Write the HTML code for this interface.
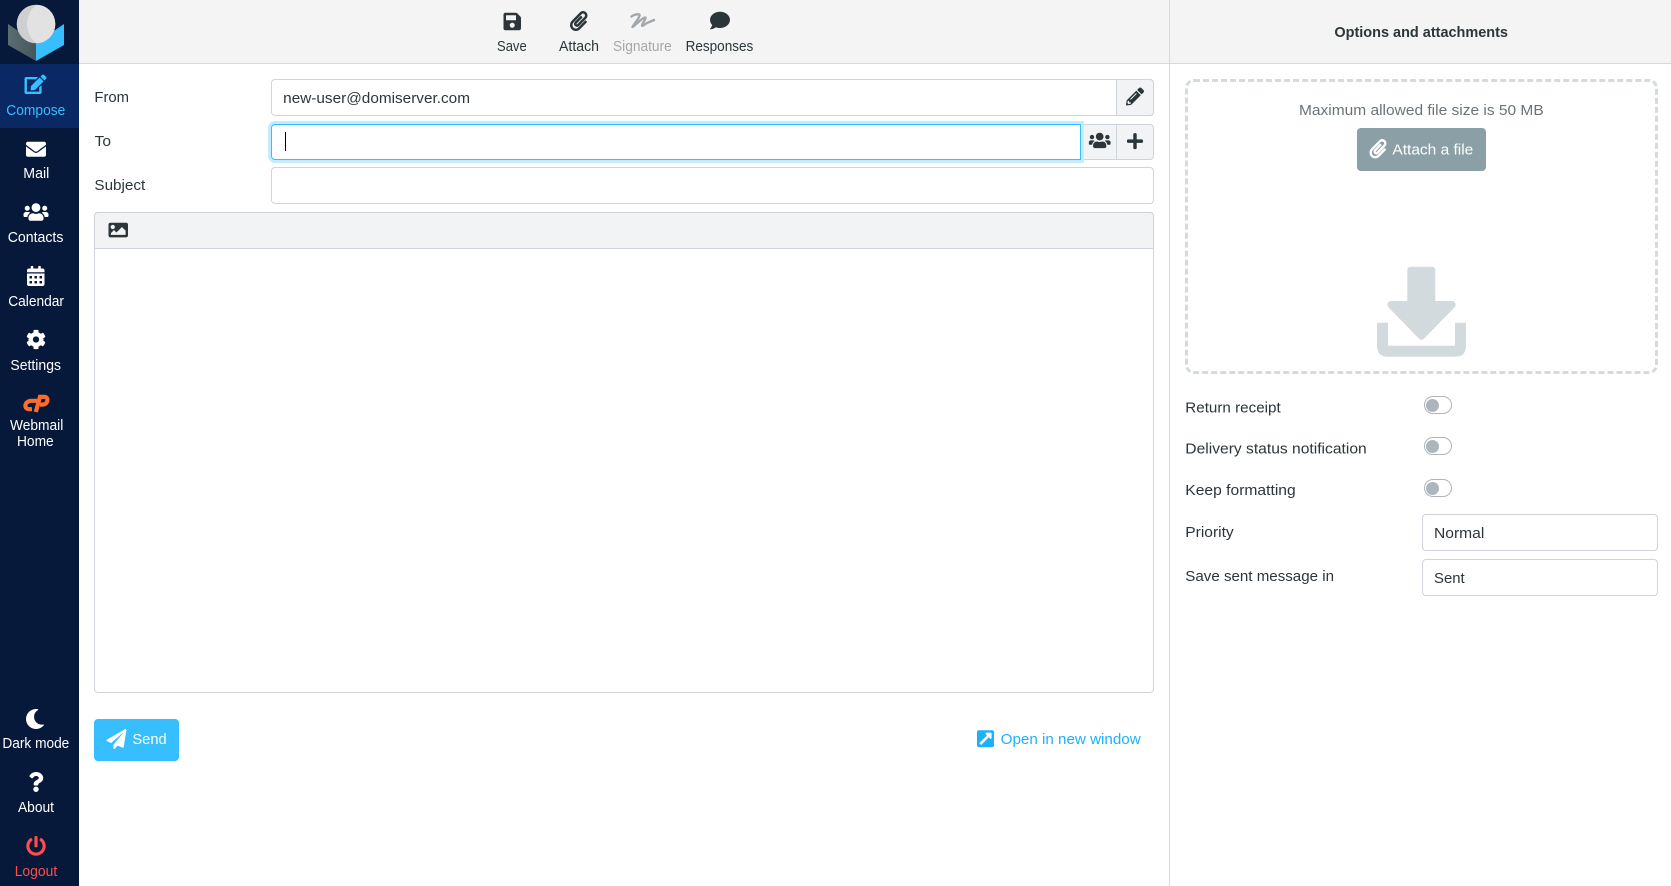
<!DOCTYPE html>
<html lang="en"><head><meta charset="utf-8"><title>Compose</title>
<style>
html,body{margin:0;padding:0;width:1671px;height:886px;overflow:hidden;background:#fff}
.b{position:absolute;box-sizing:border-box}
.in{border:1px solid #ced4da;background:#fff;border-radius:4px}
.ad{border:1px solid #ced4da;background:#f1f3f5}
.tg{left:1424px;width:28px;height:18px;border:1px solid #adb5bd;border-radius:9px;background:#fff}
.tg i{position:absolute;left:1px;top:1.5px;width:13px;height:13px;border-radius:50%;background:#adb5bd}
svg{position:absolute;left:0;top:0}
text{font-family:"Liberation Sans",Arial,sans-serif;font-size:15px;fill:#2c363a}
.w{fill:#fff}.bl{fill:#37beff}.r{fill:#ff4d4d}.g{fill:#a3a8ac}
</style></head><body>
<div class="b" style="left:0;top:0;width:79px;height:886px;background:#06193a"></div>
<div class="b" style="left:0;top:64px;width:79px;height:64px;background:#0a2864"></div>
<div class="b" style="left:79px;top:0;width:1592px;height:64px;background:#f4f4f4;border-bottom:1px solid #d4dbde"></div>
<div class="b" style="left:1169px;top:0;width:1px;height:886px;background:#d4dbde"></div>

<div class="b in" style="left:271px;top:79px;width:883px;height:37px"></div>
<div class="b ad" style="left:1116px;top:79px;width:38px;height:37px;border-radius:0 4px 4px 0"></div>
<div class="b ad" style="left:1080px;top:124px;width:37px;height:36px;border-left:0"></div>
<div class="b ad" style="left:1116px;top:124px;width:38px;height:36px;border-radius:0 4px 4px 0"></div>
<div class="b" style="left:271px;top:124px;width:810px;height:36px;background:#fff;border:1px solid #37beff;border-radius:4px 0 0 4px;box-shadow:0 0 0 3px #c3ecff"></div>
<div class="b in" style="left:271px;top:167px;width:883px;height:37px"></div>
<div class="b in" style="left:94px;top:212px;width:1060px;height:481px"></div>
<div class="b" style="left:94px;top:212px;width:1060px;height:37px;background:#f1f3f5;border:1px solid #ced4da;border-radius:4px 4px 0 0"></div>
<div class="b" style="left:94px;top:719px;width:85px;height:42px;background:#37beff;border-radius:4px"></div>

<div class="b" style="left:1185px;top:79px;width:473px;height:295px;border:3px dashed #d4dbde;border-radius:9px"></div>
<div class="b" style="left:1357px;top:128px;width:129px;height:43px;background:#8a9fa6;border-radius:4px"></div>
<div class="b tg" style="top:396px"><i></i></div>
<div class="b tg" style="top:437px"><i></i></div>
<div class="b tg" style="top:479px"><i></i></div>
<div class="b in" style="left:1422px;top:514px;width:236px;height:37px"></div>
<div class="b in" style="left:1422px;top:559px;width:236px;height:37px"></div>
<div class="b" style="left:285px;top:132px;width:1px;height:19px;background:#000"></div>

<svg width="1671" height="886" viewBox="0 0 1671 886" xmlns="http://www.w3.org/2000/svg">
<defs>
<linearGradient id="lg" x1="0" x2="1" y1="0" y2="0"><stop offset="0" stop-color="#5a6d71"/><stop offset="1" stop-color="#45575b"/></linearGradient>
<clipPath id="sp"><circle cx="36" cy="24" r="19.3"/></clipPath>
</defs>
<!-- logo -->
<path d="M8 24L36 43V61L8 45Z" fill="url(#lg)"/>
<path d="M64 24L36 43V61L64 45Z" fill="#37beff"/>
<circle cx="36" cy="24" r="19.3" fill="#cfcfcf"/>
<ellipse cx="44" cy="24" rx="17" ry="21" fill="#e2e2e2" clip-path="url(#sp)"/>

<!-- sidebar icons -->
<svg x="24.5" y="74.5" width="22" height="19.6" viewBox="0 0 576 512"><path fill="#37beff" d="M402.6 83.2l90.2 90.2c3.8 3.8 3.8 10 0 13.8L274.4 405.6l-92.8 10.3c-12.4 1.4-22.9-9.1-21.5-21.5l10.3-92.8L388.8 83.2c3.8-3.8 10-3.8 13.8 0zm162-22.9l-48.8-48.8c-15.2-15.2-39.9-15.2-55.2 0l-35.4 35.4c-3.8 3.8-3.8 10 0 13.8l90.2 90.2c3.8 3.8 10 3.8 13.8 0l35.4-35.4c15.2-15.3 15.2-40 0-55.2zM384 346.2V448H64V128h229.8c3.2 0 6.2-1.3 8.5-3.5l40-40c7.6-7.6 2.2-20.5-8.5-20.5H48C21.5 64 0 85.5 0 112v352c0 26.5 21.5 48 48 48h352c26.5 0 48-21.5 48-48V306.2c0-10.7-12.9-16-20.5-8.5l-40 40c-2.2 2.3-3.5 5.3-3.5 8.5z"/></svg>
<svg x="26" y="139.2" width="20" height="20" viewBox="0 0 512 512"><path fill="#fff" d="M502.3 190.8c3.9-3.1 9.7-.2 9.7 4.7V400c0 26.5-21.5 48-48 48H48c-26.5 0-48-21.5-48-48V195.6c0-5 5.7-7.8 9.7-4.7 22.4 17.4 52.1 39.5 154.1 113.6 21.1 15.4 56.7 47.8 92.2 47.6 35.7.3 72-32.8 92.3-47.6 102-74.1 131.6-96.3 154-113.7zM256 320c23.2.4 56.6-29.2 73.4-41.4 132.7-96.3 142.8-104.7 173.4-128.7 5.8-4.5 9.2-11.5 9.2-18.9v-19c0-26.5-21.5-48-48-48H48C21.5 64 0 85.5 0 112v19c0 7.4 3.4 14.3 9.2 18.9 30.6 23.9 40.7 32.4 173.4 128.7 16.8 12.2 50.2 41.8 73.4 41.4z"/></svg>
<svg x="23.5" y="202" width="25" height="20" viewBox="0 0 640 512"><path fill="#fff" d="M96 224c35.3 0 64-28.7 64-64s-28.7-64-64-64-64 28.7-64 64 28.7 64 64 64zm448 0c35.3 0 64-28.7 64-64s-28.7-64-64-64-64 28.7-64 64 28.7 64 64 64zm32 32h-64c-17.6 0-33.5 7.1-45.1 18.6 40.3 22.1 68.9 62 75.1 109.4h66c17.7 0 32-14.3 32-32v-32c0-35.3-28.7-64-64-64zm-256 0c61.9 0 112-50.1 112-112S381.9 32 320 32 208 82.1 208 144s50.1 112 112 112zm76.8 32h-8.3c-20.8 10-43.9 16-68.5 16s-47.6-6-68.5-16h-8.3C179.6 288 128 339.6 128 403.2V432c0 26.5 21.5 48 48 48h288c26.5 0 48-21.5 48-48v-28.8c0-63.6-51.6-115.2-115.2-115.2zm-223.7-13.4C161.5 263.1 145.6 256 128 256H64c-35.3 0-64 28.7-64 64v32c0 17.7 14.3 32 32 32h65.9c6.3-47.4 34.9-87.3 75.2-109.4z"/></svg>
<svg x="27" y="266" width="17.5" height="20" viewBox="0 0 448 512"><path fill="#fff" d="M0 464c0 26.5 21.5 48 48 48h352c26.5 0 48-21.5 48-48V192H0v272zm320-196c0-6.6 5.4-12 12-12h40c6.6 0 12 5.4 12 12v40c0 6.6-5.4 12-12 12h-40c-6.6 0-12-5.4-12-12v-40zm0 128c0-6.6 5.4-12 12-12h40c6.6 0 12 5.4 12 12v40c0 6.6-5.4 12-12 12h-40c-6.6 0-12-5.4-12-12v-40zM192 268c0-6.6 5.4-12 12-12h40c6.6 0 12 5.4 12 12v40c0 6.6-5.4 12-12 12h-40c-6.6 0-12-5.4-12-12v-40zm0 128c0-6.6 5.4-12 12-12h40c6.6 0 12 5.4 12 12v40c0 6.6-5.4 12-12 12h-40c-6.6 0-12-5.4-12-12v-40zM64 268c0-6.6 5.4-12 12-12h40c6.6 0 12 5.4 12 12v40c0 6.6-5.4 12-12 12H76c-6.6 0-12-5.4-12-12v-40zm0 128c0-6.6 5.4-12 12-12h40c6.6 0 12 5.4 12 12v40c0 6.6-5.4 12-12 12H76c-6.6 0-12-5.4-12-12v-40zM400 64h-48V16c0-8.8-7.2-16-16-16h-32c-8.8 0-16 7.2-16 16v48H160V16c0-8.8-7.2-16-16-16h-32c-8.8 0-16 7.2-16 16v48H48C21.5 64 0 85.5 0 112v48h448v-48c0-26.5-21.5-48-48-48z"/></svg>
<svg x="26" y="329.5" width="20" height="20" viewBox="0 0 512 512"><path fill="#fff" d="M487.4 315.7l-42.6-24.6c4.3-23.2 4.3-47 0-70.2l42.6-24.6c4.9-2.8 7.1-8.6 5.5-14-11.1-35.6-30-67.8-54.7-94.6-3.8-4.1-10-5.1-14.8-2.3L380.8 110c-17.9-15.4-38.5-27.3-60.8-35.1V25.8c0-5.6-3.9-10.5-9.4-11.7-36.7-8.2-74.3-7.8-109.2 0-5.5 1.2-9.4 6.1-9.4 11.7V75c-22.2 7.9-42.8 19.8-60.8 35.1L88.7 85.5c-4.9-2.8-11-1.9-14.8 2.3-24.7 26.7-43.6 58.9-54.7 94.6-1.7 5.4.6 11.2 5.5 14L67.3 221c-4.3 23.2-4.3 47 0 70.2l-42.6 24.6c-4.9 2.8-7.1 8.6-5.5 14 11.1 35.6 30 67.8 54.7 94.6 3.8 4.1 10 5.1 14.8 2.3l42.6-24.6c17.9 15.4 38.5 27.3 60.8 35.1v49.2c0 5.6 3.9 10.5 9.4 11.7 36.7 8.2 74.3 7.8 109.2 0 5.5-1.2 9.4-6.1 9.4-11.7v-49.2c22.2-7.9 42.8-19.8 60.8-35.1l42.6 24.6c4.9 2.8 11 1.9 14.8-2.3 24.7-26.7 43.6-58.9 54.7-94.6 1.5-5.5-.7-11.3-5.6-14.1zM256 336c-44.1 0-80-35.9-80-80s35.9-80 80-80 80 35.9 80 80-35.9 80-80 80z"/></svg>
<path fill="none" stroke="#ff6c2c" stroke-width="4.2" d="M37 400.8H31.5C27.500 400.8 25.400 403.300 25.400 405.800C25.400 408 27 409.200 29 409.200H32"/>
<path fill="none" stroke="#ff6c2c" stroke-width="4.2" d="M35.800 412L40 396.800H44C46.800 396.800 47.800 398.800 47.300 401C46.800 403.300 44.800 404.600 42.500 404.600H40"/>
<svg x="25" y="709" width="20" height="20" viewBox="0 0 512 512"><path fill="#fff" d="M283.211 512c78.962 0 151.079-35.925 198.857-94.792 7.068-8.708-.639-21.43-11.562-19.35-124.203 23.654-238.262-71.576-238.262-196.954 0-72.222 38.662-138.635 101.498-174.394 9.686-5.512 7.25-20.197-3.756-22.23A258.156 258.156 0 0 0 283.211 0c-141.309 0-256 114.511-256 256 0 141.309 114.511 256 256 256z"/></svg>
<svg x="28.5" y="772" width="15" height="20" viewBox="0 0 384 512"><path fill="#fff" d="M202.021 0C122.202 0 70.503 32.703 29.914 91.026c-7.363 10.58-5.093 25.086 5.178 32.874l43.138 32.709c10.373 7.865 25.132 6.026 33.253-4.148 25.049-31.381 43.63-49.449 82.757-49.449 30.764 0 68.816 19.799 68.816 49.631 0 22.552-18.617 34.134-48.993 51.164-35.423 19.86-82.299 44.576-82.299 106.405V320c0 13.255 10.745 24 24 24h72.471c13.255 0 24-10.745 24-24v-5.773c0-42.86 125.268-44.645 125.268-160.627C377.504 66.256 286.902 0 202.021 0zM192 373.459c-38.196 0-69.271 31.075-69.271 69.271 0 38.195 31.075 69.27 69.271 69.27s69.271-31.075 69.271-69.271-31.075-69.27-69.271-69.27z"/></svg>
<svg x="26" y="836" width="20" height="20" viewBox="0 0 512 512"><path fill="#ff4d4d" d="M400 54.1c63 45 104 118.6 104 201.9 0 136.8-110.8 247.7-247.5 248C120 504.3 8.2 393 8 256.4 7.9 173.1 48.9 99.3 111.8 54.2c11.7-8.3 28-4.8 35 7.7L162.6 90c5.9 10.5 3.1 23.8-6.6 31-41.5 30.8-68 79.6-68 134.9-.1 92.3 74.5 168.1 168 168.1 91.6 0 168.6-74.2 168-169.1-.3-51.8-24.7-101.8-68.1-134-9.7-7.2-12.4-20.5-6.5-30.9l15.8-28.1c7-12.4 23.2-16.1 34.8-7.8zM296 264V24c0-13.3-10.7-24-24-24h-32c-13.3 0-24 10.7-24 24v240c0 13.3 10.7 24 24 24h32c13.3 0 24-10.7 24-24z"/></svg>

<!-- sidebar labels -->
<text class="bl" x="6.3" y="115" textLength="59" lengthAdjust="spacingAndGlyphs">Compose</text>
<text class="w" x="23.3" y="178" textLength="26" lengthAdjust="spacingAndGlyphs">Mail</text>
<text class="w" x="7.7" y="242" textLength="55.7" lengthAdjust="spacingAndGlyphs">Contacts</text>
<text class="w" x="8.2" y="306" textLength="55.8" lengthAdjust="spacingAndGlyphs">Calendar</text>
<text class="w" x="10.4" y="370" textLength="50.6" lengthAdjust="spacingAndGlyphs">Settings</text>
<text class="w" x="10" y="430" textLength="53.3" lengthAdjust="spacingAndGlyphs">Webmail</text>
<text class="w" x="17" y="446" textLength="36.7" lengthAdjust="spacingAndGlyphs">Home</text>
<text class="w" x="2.4" y="748" textLength="66.9" lengthAdjust="spacingAndGlyphs">Dark mode</text>
<text class="w" x="18" y="812" textLength="36" lengthAdjust="spacingAndGlyphs">About</text>
<text class="r" x="14.7" y="876" textLength="42.6" lengthAdjust="spacingAndGlyphs">Logout</text>

<!-- toolbar -->
<svg x="503.5" y="11.5" width="17.5" height="20" viewBox="0 0 448 512"><path fill="#2c363a" d="M433.941 129.941l-83.882-83.882A48 48 0 0 0 316.118 32H48C21.49 32 0 53.49 0 80v352c0 26.51 21.49 48 48 48h352c26.51 0 48-21.49 48-48V163.882a48 48 0 0 0-14.059-33.941zM224 416c-35.346 0-64-28.654-64-64 0-35.346 28.654-64 64-64s64 28.654 64 64c0 35.346-28.654 64-64 64zm96-304.52V212c0 6.627-5.373 12-12 12H76c-6.627 0-12-5.373-12-12V108c0-6.627 5.373-12 12-12h228.52c3.183 0 6.235 1.264 8.485 3.515l3.48 3.48A11.996 11.996 0 0 1 320 111.48z"/></svg>
<svg x="570" y="11" width="17.5" height="20" viewBox="0 0 448 512"><path fill="#2c363a" d="M43.246 466.142c-58.43-60.289-57.341-157.511 1.386-217.581L254.392 34c44.316-45.332 116.351-45.336 160.671 0 43.89 44.894 43.943 117.329 0 162.276L232.214 383.128c-29.855 30.537-78.633 30.111-107.982-.998-28.275-29.97-27.368-77.473 1.452-106.953l143.743-146.835c6.182-6.314 16.312-6.422 22.626-.241l22.861 22.379c6.315 6.182 6.422 16.312.241 22.626L171.427 319.927c-4.932 5.045-5.236 13.428-.648 18.292 4.372 4.634 11.245 4.711 15.688.165l182.849-186.851c19.613-20.062 19.613-52.725-.011-72.798-19.189-19.627-49.957-19.637-69.154 0L90.39 293.295c-34.763 35.56-35.299 93.12-1.191 128.313 34.01 35.093 88.985 35.137 123.058.286l172.06-175.999c6.177-6.319 16.307-6.433 22.626-.256l22.877 22.364c6.319 6.177 6.434 16.307.256 22.626l-172.06 175.998c-59.576 60.938-155.943 60.216-214.77-.485z"/></svg>
<path d="M631.5 16.5C634 14.5 640 13 639.5 15.5C639 19 634 24 632.5 27C637 24 642 18 645 17.5C647 17.5 642 24 642 25.5C642.5 27 646 23 648 22.5C650 22 651.5 21 654 20" fill="none" stroke="#a3a8ac" stroke-width="2.4" stroke-linecap="round" stroke-linejoin="round"/>
<svg x="710" y="10.5" width="20" height="20" viewBox="0 0 512 512"><path fill="#2c363a" d="M256 32C114.6 32 0 125.1 0 240c0 49.6 21.4 95 57 130.7C44.5 421.1 2.7 466 2.2 466.5c-2.2 2.3-2.8 5.7-1.5 8.7S4.8 480 8 480c66.3 0 116-31.8 140.6-51.4 32.7 12.3 69 19.4 107.4 19.4 141.4 0 256-93.1 256-208S397.4 32 256 32z"/></svg>
<text x="497" y="51" textLength="29.7" lengthAdjust="spacingAndGlyphs" style="font-size:14.4px">Save</text>
<text x="559" y="51" textLength="40" lengthAdjust="spacingAndGlyphs" style="font-size:14.4px">Attach</text>
<text class="g" x="613" y="51" textLength="58.7" lengthAdjust="spacingAndGlyphs" style="font-size:14.4px">Signature</text>
<text x="685.6" y="51" textLength="67.7" lengthAdjust="spacingAndGlyphs" style="font-size:14.4px">Responses</text>
<text x="1334.4" y="37" textLength="173.6" lengthAdjust="spacingAndGlyphs" style="font-weight:bold;font-size:14.8px">Options and attachments</text>

<!-- form -->
<text x="94.4" y="102" textLength="34.6" lengthAdjust="spacingAndGlyphs">From</text>
<text x="94.6" y="146" textLength="16.4" lengthAdjust="spacingAndGlyphs">To</text>
<text x="94.4" y="190" textLength="50.9" lengthAdjust="spacingAndGlyphs">Subject</text>
<text x="283.2" y="103" textLength="186.8" lengthAdjust="spacingAndGlyphs">new-user@domiserver.com</text>
<svg x="1126" y="87.5" width="18" height="18" viewBox="0 0 512 512"><path fill="#2c363a" d="M497.9 142.1l-46.1 46.1c-4.7 4.7-12.3 4.7-17 0l-111-111c-4.7-4.7-4.7-12.3 0-17l46.1-46.1c18.7-18.7 49.1-18.7 67.9 0l60.1 60.1c18.8 18.7 18.8 49.1 0 67.9zM284.2 99.8L21.6 362.4.4 483.9c-2.9 16.4 11.4 30.6 27.8 27.8l121.5-21.3 262.6-262.6c4.7-4.7 4.7-12.3 0-17l-111-111c-4.8-4.7-12.4-4.7-17.1 0zM124.1 339.9c-5.5-5.5-5.5-14.3 0-19.8l154-154c5.5-5.5 14.3-5.5 19.8 0s5.5 14.3 0 19.8l-154 154c-5.5 5.5-14.3 5.5-19.8 0zM88 424h48v36.3l-64.5 11.3-31.1-31.1L51.7 376H88v48z"/></svg>
<svg x="1088.7" y="131.6" width="22" height="17.6" viewBox="0 0 640 512"><path fill="#2c363a" d="M96 224c35.3 0 64-28.7 64-64s-28.7-64-64-64-64 28.7-64 64 28.7 64 64 64zm448 0c35.3 0 64-28.7 64-64s-28.7-64-64-64-64 28.7-64 64 28.7 64 64 64zm32 32h-64c-17.6 0-33.5 7.1-45.1 18.6 40.3 22.1 68.9 62 75.1 109.4h66c17.7 0 32-14.3 32-32v-32c0-35.3-28.7-64-64-64zm-256 0c61.9 0 112-50.1 112-112S381.9 32 320 32 208 82.1 208 144s50.1 112 112 112zm76.8 32h-8.3c-20.8 10-43.9 16-68.5 16s-47.6-6-68.5-16h-8.3C179.6 288 128 339.6 128 403.2V432c0 26.5 21.5 48 48 48h288c26.5 0 48-21.5 48-48v-28.8c0-63.6-51.6-115.2-115.2-115.2zm-223.7-13.4C161.5 263.1 145.6 256 128 256H64c-35.3 0-64 28.7-64 64v32c0 17.7 14.3 32 32 32h65.9c6.3-47.4 34.9-87.3 75.2-109.4z"/></svg>
<svg x="1127" y="132" width="16" height="18.3" viewBox="0 0 448 512"><path fill="#2c363a" d="M416 208H272V64c0-17.67-14.33-32-32-32h-32c-17.67 0-32 14.33-32 32v144H32c-17.67 0-32 14.33-32 32v32c0 17.67 14.33 32 32 32h144v144c0 17.67 14.33 32 32 32h32c17.67 0 32-14.33 32-32V304h144c17.67 0 32-14.33 32-32v-32c0-17.67-14.33-32-32-32z"/></svg>
<svg x="108.5" y="220.3" width="19.5" height="19.5" viewBox="0 0 512 512"><path fill="#2c363a" d="M464 448H48c-26.51 0-48-21.49-48-48V112c0-26.51 21.49-48 48-48h416c26.51 0 48 21.49 48 48v288c0 26.51-21.49 48-48 48zM112 120c-30.928 0-56 25.072-56 56s25.072 56 56 56 56-25.072 56-56-25.072-56-56-56zM64 384h384V272l-87.515-87.515c-4.686-4.686-12.284-4.686-16.971 0L208 320l-55.515-55.515c-4.686-4.686-12.284-4.686-16.971 0L64 336v48z"/></svg>
<svg x="106.5" y="729" width="20" height="20" viewBox="0 0 512 512"><path fill="#fff" d="M476 3.2L12.5 270.6c-18.1 10.4-15.8 35.6 2.2 43.2L121 358.4l287.3-253.2c5.5-4.9 13.3 2.6 8.6 8.3L176 407v80.5c0 23.6 28.5 32.9 42.5 15.8L282 426l124.6 52.2c14.2 6 30.4-2.9 33-18.2l72-432C515 7.8 493.3-6.8 476 3.2z"/></svg>
<text class="w" x="132.4" y="744" textLength="34.3" lengthAdjust="spacingAndGlyphs">Send</text>
<svg x="977" y="729" width="17" height="19.5" viewBox="0 0 448 512"><path fill="#1eb0ff" d="M448 80v352c0 26.51-21.49 48-48 48H48c-26.51 0-48-21.49-48-48V80c0-26.51 21.49-48 48-48h352c26.51 0 48 21.49 48 48zm-88 16H248.029c-21.313 0-32.08 25.861-16.971 40.971l31.984 31.987L67.515 364.485c-4.686 4.686-4.686 12.284 0 16.971l31.029 31.029c4.686 4.686 12.284 4.686 16.971 0l195.526-195.526 31.988 31.991C357.058 263.977 384 253.425 384 231.979V120c0-13.255-10.745-24-24-24z"/></svg>
<text x="1000.7" y="744" textLength="140" lengthAdjust="spacingAndGlyphs" style="fill:#1eb0ff">Open in new window</text>

<!-- right panel -->
<text x="1299" y="115" textLength="244.7" lengthAdjust="spacingAndGlyphs" style="fill:#6a7478">Maximum allowed file size is 50 MB</text>
<svg x="1369.5" y="139" width="17" height="19.5" viewBox="0 0 448 512"><path fill="#fff" d="M43.246 466.142c-58.43-60.289-57.341-157.511 1.386-217.581L254.392 34c44.316-45.332 116.351-45.336 160.671 0 43.89 44.894 43.943 117.329 0 162.276L232.214 383.128c-29.855 30.537-78.633 30.111-107.982-.998-28.275-29.97-27.368-77.473 1.452-106.953l143.743-146.835c6.182-6.314 16.312-6.422 22.626-.241l22.861 22.379c6.315 6.182 6.422 16.312.241 22.626L171.427 319.927c-4.932 5.045-5.236 13.428-.648 18.292 4.372 4.634 11.245 4.711 15.688.165l182.849-186.851c19.613-20.062 19.613-52.725-.011-72.798-19.189-19.627-49.957-19.637-69.154 0L90.39 293.295c-34.763 35.56-35.299 93.12-1.191 128.313 34.01 35.093 88.985 35.137 123.058.286l172.06-175.999c6.177-6.319 16.307-6.433 22.626-.256l22.877 22.364c6.319 6.177 6.434 16.307.256 22.626l-172.06 175.998c-59.576 60.938-155.943 60.216-214.77-.485z"/></svg>
<text class="w" x="1392.4" y="154.3" textLength="80.9" lengthAdjust="spacingAndGlyphs">Attach a file</text>
<path fill="#d3dadd" d="M1411 266.7H1431.7Q1435.3 266.7 1435.3 270.3V301H1451.5C1455.5 301 1456.8 305 1454.3 307.6L1424.2 338.5Q1421.5 341 1418.8 338.5L1388.7 307.6C1386.2 305 1387.5 301 1391.5 301H1407.3V270.3Q1407.3 266.7 1411 266.7Z"/>
<path fill="#d3dadd" d="M1377 322.7H1388V345.7H1455V322.7H1466V345.7Q1466 356.7 1455 356.7H1388Q1377 356.7 1377 345.7Z"/>
<text x="1185.3" y="412.3" textLength="95.4" lengthAdjust="spacingAndGlyphs">Return receipt</text>
<text x="1185.3" y="453.3" textLength="181.4" lengthAdjust="spacingAndGlyphs">Delivery status notification</text>
<text x="1185.3" y="495" textLength="110.4" lengthAdjust="spacingAndGlyphs">Keep formatting</text>
<text x="1185.3" y="537" textLength="48.4" lengthAdjust="spacingAndGlyphs">Priority</text>
<text x="1185.3" y="581" textLength="148.7" lengthAdjust="spacingAndGlyphs">Save sent message in</text>
<text x="1434" y="538" textLength="50.3" lengthAdjust="spacingAndGlyphs">Normal</text>
<text x="1434" y="583" textLength="30.7" lengthAdjust="spacingAndGlyphs">Sent</text>
</svg>
</body></html>
